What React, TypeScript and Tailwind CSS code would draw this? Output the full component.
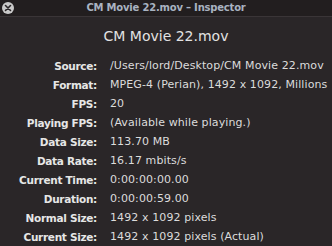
import React from "react";

const rows: [string, string][] = [
  ["Source:", "/Users/lord/Desktop/CM Movie 22.mov"],
  ["Format:", "MPEG-4 (Perian), 1492 x 1092, Millions"],
  ["FPS:", "20"],
  ["Playing FPS:", "(Available while playing.)"],
  ["Data Size:", "113.70 MB"],
  ["Data Rate:", "16.17 mbits/s"],
  ["Current Time:", "0:00:00:00.00"],
  ["Duration:", "0:00:00:59.00"],
  ["Normal Size:", "1492 x 1092 pixels"],
  ["Current Size:", "1492 x 1092 pixels (Actual)"],
];

export default function App() {
  return (
    <div
      className="w-[332px] h-[246px] bg-[#2a2628] overflow-hidden flex flex-col"
      style={{ fontFamily: '"DejaVu Sans", "Noto Sans", sans-serif' }}
    >
      <div className="relative h-[17px] shrink-0 bg-[#221e1f] border-b border-[#3a3537] flex items-center justify-center">
        <div className="absolute left-[2px] top-[2px] w-[12px] h-[12px] rounded-full bg-[#c9c9c9] flex items-center justify-center">
          <svg width="8" height="8" viewBox="0 0 8 8">
            <path d="M1.5 1.5 L6.5 6.5 M6.5 1.5 L1.5 6.5" stroke="#2a2628" strokeWidth="1.6" strokeLinecap="round" />
          </svg>
        </div>
        <span className="text-[10px] font-bold tracking-[-0.2px] text-[#a9b3c1] leading-none">CM Movie 22.mov – Inspector</span>
      </div>
      <div className="h-[39px] shrink-0 flex items-center justify-center text-[14px] text-[#e2e2e2]">
        CM Movie 22.mov
      </div>
      <div className="flex flex-col pt-[1px]">
        {rows.map(([k, v]) => (
          <div key={k} className="flex h-[19px] items-center text-[11px]">
            <div className="w-[97px] text-right font-bold text-[10.5px] tracking-[-0.3px] text-[#e6e6e6] shrink-0">{k}</div>
            <div className="pl-[13px] text-[#dcdcdc] whitespace-nowrap tracking-[0.1px]">{v}</div>
          </div>
        ))}
      </div>
    </div>
  );
}
